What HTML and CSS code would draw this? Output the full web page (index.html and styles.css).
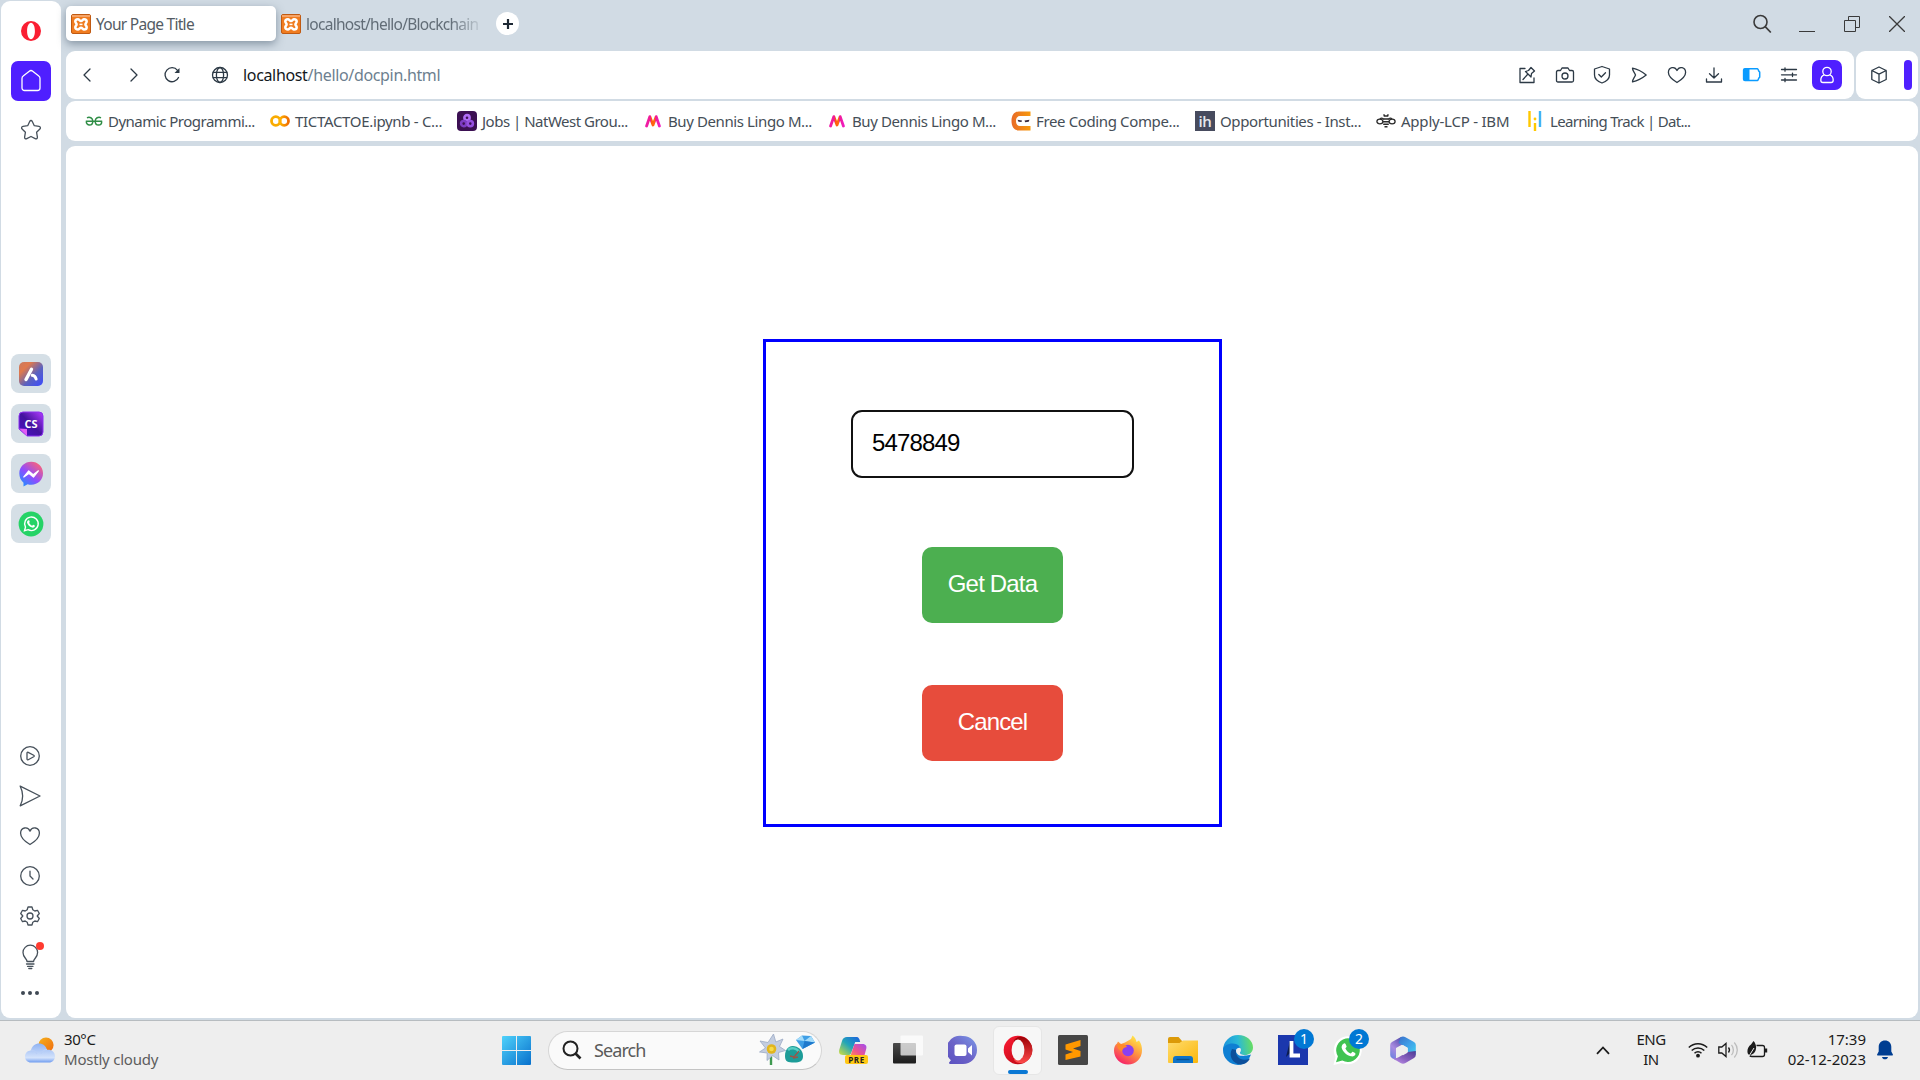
FILE: index.html
```html
<!DOCTYPE html>
<html lang="en">
<head>
<meta charset="utf-8">
<title>Your Page Title</title>
<link rel="stylesheet" href="styles.css">
</head>
<body>
<svg class="defs" width="0" height="0" aria-hidden="true">
  <defs>
    <linearGradient id="gWin" x1="0" y1="0" x2="1" y2="1"><stop offset="0" stop-color="#4fd2fb"/><stop offset="1" stop-color="#0870cc"/></linearGradient>
    <linearGradient id="gAria" x1="0" y1="0" x2="1" y2="1"><stop offset="0" stop-color="#c97a62"/><stop offset=".25" stop-color="#e0794c"/><stop offset=".6" stop-color="#5a62c0"/><stop offset="1" stop-color="#3c4bff"/></linearGradient>
    <linearGradient id="gMsg" x1="0" y1="1" x2=".8" y2="0"><stop offset="0" stop-color="#0a9cff"/><stop offset=".5" stop-color="#8f4cff"/><stop offset="1" stop-color="#ff6474"/></linearGradient>
    <linearGradient id="gCs" x1="0" y1="1" x2="1" y2="0"><stop offset="0" stop-color="#4a10c8"/><stop offset=".5" stop-color="#43129e"/><stop offset="1" stop-color="#b23cff"/></linearGradient>
    <linearGradient id="gCloud" x1="0" y1="0" x2="0" y2="1"><stop offset="0" stop-color="#8fb2f2"/><stop offset=".75" stop-color="#d4e3fb"/><stop offset="1" stop-color="#6f9cf0"/></linearGradient>
    <linearGradient id="gSun" x1="0" y1="0" x2="1" y2="1"><stop offset="0" stop-color="#f5b21c"/><stop offset="1" stop-color="#f06a10"/></linearGradient>
    <linearGradient id="gOpera" x1="0" y1="0" x2="1" y2="1"><stop offset="0" stop-color="#ff1b35"/><stop offset="1" stop-color="#b0070f"/></linearGradient>
    <linearGradient id="gOpera2" x1="0" y1="0" x2="0" y2="1"><stop offset="0" stop-color="#9c0006"/><stop offset="1" stop-color="#ff4b4b"/></linearGradient>
    <linearGradient id="gFolder" x1="0" y1="0" x2="1" y2="1"><stop offset="0" stop-color="#ffdc6e"/><stop offset="1" stop-color="#fbb70b"/></linearGradient>
    <linearGradient id="gEdge" x1="0" y1=".4" x2="1" y2=".3"><stop offset="0" stop-color="#1b93dc"/><stop offset=".5" stop-color="#2bb9d6"/><stop offset="1" stop-color="#6be05a"/></linearGradient>
    <linearGradient id="gFox" x1=".8" y1="0" x2=".2" y2="1"><stop offset="0" stop-color="#fff04a"/><stop offset=".45" stop-color="#ff9640"/><stop offset="1" stop-color="#f5156c"/></linearGradient>
    <linearGradient id="gChat" x1="0" y1="1" x2="1" y2="0"><stop offset="0" stop-color="#5a50c0"/><stop offset=".5" stop-color="#6c63c8"/><stop offset="1" stop-color="#7b9ae8"/></linearGradient>
    <linearGradient id="gCopA" x1="1" y1="0" x2="0" y2="1"><stop offset="0" stop-color="#1b5fe0"/><stop offset=".5" stop-color="#22a5b8"/><stop offset="1" stop-color="#d4e03c"/></linearGradient>
    <linearGradient id="gCopB" x1="1" y1="0" x2="0" y2="1"><stop offset="0" stop-color="#a04cf0"/><stop offset=".6" stop-color="#f0568c"/><stop offset="1" stop-color="#ff9a4c"/></linearGradient>
    <linearGradient id="gDark" x1="0" y1="0" x2="0" y2="1"><stop offset="0" stop-color="#4b4b4b"/><stop offset="1" stop-color="#1c1c1c"/></linearGradient>
    <linearGradient id="gColab" x1="0" y1="0" x2="1" y2="0"><stop offset="0" stop-color="#ffb400"/><stop offset="1" stop-color="#ef6c00"/></linearGradient>
    <linearGradient id="gCn" x1="0" y1="0" x2="1" y2="0"><stop offset="0" stop-color="#e86a28"/><stop offset="1" stop-color="#f79a0c"/></linearGradient>
    <linearGradient id="gMy" x1="0" y1="0" x2="1" y2="0"><stop offset="0" stop-color="#f01ca8"/><stop offset=".3" stop-color="#f01c90"/><stop offset=".36" stop-color="#ff5a10"/><stop offset=".64" stop-color="#ff6a10"/><stop offset=".7" stop-color="#f01c90"/><stop offset="1" stop-color="#f01cc0"/></linearGradient>
    <linearGradient id="gMa" x1="0" y1="1" x2=".6" y2="0"><stop offset="0" stop-color="#5c7fe0"/><stop offset=".5" stop-color="#a98be0"/><stop offset="1" stop-color="#5a4fb0"/></linearGradient>
    <linearGradient id="gMb" x1="0" y1="0" x2="1" y2="1"><stop offset="0" stop-color="#3a6fc8"/><stop offset=".5" stop-color="#3f9fe8"/><stop offset="1" stop-color="#40d0f0"/></linearGradient>
    <linearGradient id="gMc" x1="1" y1="0" x2="0" y2="1"><stop offset="0" stop-color="#4c3a94"/><stop offset=".55" stop-color="#8a62c0"/><stop offset="1" stop-color="#c79af0"/></linearGradient>
    <symbol id="xampp" viewBox="0 0 20 20"><rect x=".5" y=".5" width="19" height="19" rx="1.500" fill="#f07c20" stroke="#c05a12"/><rect x="1" y="1" width="18" height="2" fill="#f6a467"/><g fill="none" stroke="#fff" stroke-width="2.500" stroke-linejoin="round"><path d="M7 5.300c1.200 0 1.700 1.800 3 1.800s1.800-1.800 3-1.800c1.800 0 2.700 1 2.700 2.300 0 1.200-1.300 1.600-1.300 2.800s1.300 1.600 1.300 2.800c0 1.300-.9 2.300-2.700 2.300-1.200 0-1.700-1.800-3-1.800s-1.800 1.800-3 1.800c-1.800 0-2.700-1-2.700-2.300 0-1.200 1.300-1.600 1.300-2.800S4.300 8.800 4.300 7.600C4.300 6.300 5.200 5.300 7 5.300z"/></g><path d="M8.500 10.400h3" stroke="#fff" stroke-width="1.500"/></symbol>
    <symbol id="myntra" viewBox="0 0 16 14"><path d="M1.600 12 4.800 2.600 8 11 11.200 2.600 14.400 12" fill="none" stroke="url(#gMy)" stroke-width="2.800" stroke-linejoin="round" stroke-linecap="round"/></symbol>
  </defs>
</svg>

<div class="browser">
  <aside class="sidebar">
    <svg class="opera-mark" width="20" height="20" viewBox="0 0 20 20"><path fill-rule="evenodd" fill="#fa1e32" d="M10 0a10 10 0 1 0 0 20a10 10 0 0 0 0-20zM10 1.800c2.300 0 3.900 3.600 3.900 8.200s-1.600 8.200-3.900 8.200S6.100 14.600 6.100 10 7.700 1.800 10 1.800z"/></svg>
    <div class="home"><svg class="line" width="22" height="24" viewBox="0 0 22 24"><path d="M2 9.500c0-1 .4-1.900 1.200-2.500L9.300 2.200c1-.8 2.400-.8 3.400 0L18.800 7c.8.600 1.200 1.500 1.200 2.500V19a2.500 2.500 0 0 1-2.500 2.500h-13A2.500 2.500 0 0 1 2 19z"/></svg></div>
    <svg class="line star" width="22" height="22" viewBox="0 0 22 22"><path d="M11 1.500c.6 0 1 .4 1.300 1l2 4.200 4.700.7c1.400.2 1.900 1.600.9 2.600l-3.300 3.300.8 4.800c.2 1.300-1 2.200-2.200 1.600L11 17.500l-4.200 2.200c-1.200.6-2.400-.3-2.200-1.600l.8-4.800L2.100 10c-1-1-.5-2.400.9-2.600l4.700-.7 2-4.200c.3-.6.700-1 1.300-1z"/></svg>

    <div class="apps">
      <div class="app"><svg width="26" height="26" viewBox="0 0 26 26"><rect x="1" y="1" width="24" height="24" rx="5" fill="url(#gAria)"/><path d="M8 18.500 13.500 8.300" stroke="#fff" stroke-width="3.400" stroke-linecap="round"/><path d="M14.300 14.300c2 .2 3.300 1.600 3.800 3.700" fill="none" stroke="#fff" stroke-width="3" stroke-linecap="round"/></svg></div>
      <div class="app"><svg width="26" height="26" viewBox="0 0 26 26"><path d="M5 1h16a4 4 0 0 1 4 4v16a4 4 0 0 1-4 4H9L1 18V5a4 4 0 0 1 4-4z" fill="url(#gCs)" stroke="#8b30f0"/><path d="m1 17.500 8 .500V25z" fill="#e05cf5"/><text x="13" y="17" class="cs-text">CS</text></svg></div>
      <div class="app"><svg width="26" height="26" viewBox="0 0 26 26"><path d="M13.300.800c6.600 0 11.700 4.900 11.700 11.500S20 23.700 13.300 23.700c-1.300 0-2.500-.1-3.700-.5L5.500 25.600v-3.900C2.900 19.500 1.300 16.300 1.300 12.300 1.300 5.700 6.700.800 13.300.800z" fill="url(#gMsg)"/><path d="m5.800 16 4.900-6 4.500 3.700 5.200-3.900-4.900 6.300-4.700-3.700z" fill="#fff" stroke="#fff" stroke-width="1.200" stroke-linejoin="round"/></svg></div>
      <div class="app"><svg width="26" height="26" viewBox="0 0 26 26"><circle cx="13" cy="13" r="12.400" fill="#25d366"/><path d="m6.500 19.700 1-3.600a6.800 6.800 0 1 1 2.600 2.600z" fill="none" stroke="#fff" stroke-width="1.400"/><path d="M10.500 9.300c.5-.3.900 0 1.200 1.400 0 .5-.5.800-.6 1.100.7 1.400 1.600 2.300 3 2.900.4-.1.700-.8 1.100-.9.800.3 1.700.7 1.700 1.200-.2 1.300-1.600 1.800-2.700 1.600-3-.8-4.700-2.800-5.200-5-.1-1 .6-2 1.500-2.300z" fill="#fff"/></svg></div>
    </div>

    <div class="tools">
      <svg class="line" width="22" height="22" viewBox="0 0 22 22"><circle cx="11" cy="11" r="9.300"/><path d="M8 8c0-.8.600-1 1.200-.7l5.500 2.900c.7.400.7 1.200 0 1.600l-5.500 2.900c-.6.300-1.200 0-1.200-.7z"/></svg>
      <svg class="line" width="22" height="22" viewBox="0 0 22 22"><path d="M1.200 1.200 21 11 1.200 20.800C4.600 14 4.600 8 1.200 1.200z"/></svg>
      <svg class="line" width="22" height="22" viewBox="0 0 22 22"><path d="M11 19.500C8.500 18 1.600 13.500 1.600 8.200c0-5.700 7.200-7.500 9.400-2 2.200-5.500 9.400-3.700 9.400 2 0 5.300-6.900 9.800-9.400 11.300z"/></svg>
      <svg class="line" width="22" height="22" viewBox="0 0 22 22"><circle cx="11" cy="11" r="9.300"/><path d="M11 6.200V11l3 3"/></svg>
      <svg class="line" width="22" height="22" viewBox="0 0 22 22"><path d="M9 2h4l.8 2.800 2 1.200 2.700-.7 1.800 3.200L18.200 11l2.100 2.500-1.800 3.200-2.700-.7-2 1.200L13 20H9l-.8-2.800-2-1.200-2.700.7-1.800-3.200L3.800 11 1.700 8.500l1.800-3.200 2.700.7 2-1.200z"/><circle cx="11" cy="11" r="3"/></svg>
      <div class="bulb"><svg class="line" width="22" height="26" viewBox="0 0 22 26"><path d="M8 17.500c0-3-4-4-4-9a7.300 7.300 0 0 1 14.600 0c0 5-4 6-4 9zM7.500 20h7.500M8.500 22.300h5.500M9.800 24.500h3"/></svg><i class="dot"></i></div>
      <svg class="dots" width="22" height="6" viewBox="0 0 22 6"><circle cx="4" cy="3" r="2"/><circle cx="11" cy="3" r="2"/><circle cx="18" cy="3" r="2"/></svg>
    </div>
  </aside>

  <main class="main">
    <header class="tabs">
      <div class="tab active"><svg width="20" height="20"><use href="#xampp"/></svg><span class="t-tab1">Your Page Title</span></div>
      <div class="tab second"><svg width="20" height="20"><use href="#xampp"/></svg><span class="fade t-tab2">localhost/hello/Blockchain</span></div>
      <div class="plus"><svg width="10" height="10" viewBox="0 0 10 10"><path d="M5 0v10M0 5h10" stroke="#1c2733" stroke-width="2.200"/></svg></div>
      <div class="window-controls">
        <svg class="ctl" width="20" height="20" viewBox="0 0 20 20"><circle cx="8.500" cy="8" r="6.500" stroke-width="1.600"/><path d="m13.200 12.700 5.600 5.800" stroke-width="1.700"/></svg>
        <svg class="ctl" width="16" height="16" viewBox="0 0 16 16"><path d="M0 15.500h16"/></svg>
        <svg class="ctl" width="16" height="16" viewBox="0 0 16 16"><path d="M.5 4.500h11v11H.5zM4.500 4.500v-4h11v11h-4"/></svg>
        <svg class="ctl" width="16" height="16" viewBox="0 0 16 16"><path d="m0 0 16 16M16 0 0 16" stroke-width="1.300"/></svg>
      </div>
    </header>

    <div class="address-row">
      <div class="address">
        <div class="nav">
          <svg class="line" width="20" height="20" viewBox="0 0 20 20"><path d="M13 4 7 10l6 6"/></svg>
          <svg class="line fwd" width="20" height="20" viewBox="0 0 20 20"><path d="m7 4 6 6-6 6"/></svg>
          <svg class="line reload" width="20" height="20" viewBox="0 0 20 20"><path d="M16.500 12.500A7 7 0 1 1 15.500 5.300"/><path d="M17.500 3v5h-5z" fill="#2c3945" stroke="none"/></svg>
          <svg class="line globe" width="20" height="20" viewBox="0 0 20 20"><circle cx="10" cy="10" r="7.500"/><ellipse cx="10" cy="10" rx="3.600" ry="7.500"/><path d="M3.300 7.300h13.400M3.300 12.700h13.400"/></svg>
          <span class="url"><b>localhost</b>/hello/docpin.html</span>
        </div>
        <div class="actions">
          <span><svg class="line" width="20" height="20" viewBox="0 0 20 20"><path d="M8 3.500H3v14h14v-4.500M11.500 5.500l2.500-3 3.500 3.500-3 2.500-.5 3.500-5.500-5.500zM10.500 9.500l-4.500 5"/></svg></span>
          <span><svg class="line" width="20" height="20" viewBox="0 0 20 20"><path d="M3 5.500h2.500L7 3h6l1.500 2.500H17c1 0 1.500.7 1.500 1.500v8.500c0 1-.5 1.500-1.500 1.500H3c-1 0-1.500-.5-1.500-1.500V7c0-.8.500-1.500 1.500-1.500z"/><circle cx="10" cy="11" r="3"/></svg></span>
          <span><svg class="line" width="20" height="20" viewBox="0 0 20 20"><path d="M10 1.500 17.500 4v6c0 4-3.200 6.500-7.500 8-4.300-1.500-7.500-4-7.500-8V4z"/><path d="m6.800 9.500 2.500 2.500 4.200-4.200"/></svg></span>
          <span><svg class="line" width="20" height="20" viewBox="0 0 20 20"><path d="M3.500 3.200c4 .8 9.500 3.400 13.700 6.800-4.200 3.400-9.700 6-13.700 6.800 0-2.500 2-4 3-6.800-1-2.800-3-4.300-3-6.800z"/></svg></span>
          <span><svg class="line" width="20" height="20" viewBox="0 0 20 20"><path d="M10 17.500C7.500 16 1.400 12 1.400 7.500c0-5.300 6.500-6.800 8.600-2 2.100-4.800 8.600-3.300 8.600 2 0 4.500-6.100 8.500-8.600 10z"/></svg></span>
          <span><svg class="line" width="20" height="20" viewBox="0 0 20 20"><path d="M10 3v9.500M5.500 8.800 10 13l4.500-4.200M2.500 14v3h15v-3"/></svg></span>
          <span><svg width="20" height="20" viewBox="0 0 20 20"><path d="M3 3.700h12.500c.7 0 .7 2.300 2.200 3.400v5c-1.500 1.100-1.500 3.400-2.200 3.400H3c-1 0-1.400-.5-1.400-1.300V5c0-.8.4-1.300 1.400-1.300z" fill="none" stroke="#0a9bff" stroke-width="1.500"/><path d="M2 3.700h5.500v11.800H2z" fill="#0a9bff"/></svg></span>
          <span><svg class="line" width="20" height="20" viewBox="0 0 20 20"><path d="M2.500 4.500h15M2.500 9.800h15M2.500 15h15M6 2.800v3.400M13.500 8.100v3.400M6 13.300v3.400"/></svg></span>
          <span><em class="profile"><svg class="line" width="20" height="20" viewBox="0 0 20 20"><circle cx="10" cy="6.500" r="4.200"/><path d="M7 10c-1.900.7-3.200 2.800-3.200 5.200 0 1.800 1 2.300 2.200 2.300h8c1.200 0 2.200-.5 2.200-2.300 0-2.400-1.300-4.500-3.200-5.200"/></svg></em></span>
        </div>
      </div>
      <div class="side-pill">
        <svg class="line" width="20" height="20" viewBox="0 0 20 20"><path d="m10 2 7.200 3.500v9L10 18l-7.200-3.500v-9zM2.800 5.500 10 9.200l7.200-3.700M10 9.200V18"/></svg>
        <i class="bar"></i>
      </div>
    </div>

    <nav class="bookmarks">
      <a class="bm w1"><svg width="18" height="20" viewBox="0 0 18 20"><path d="M.8 10.200h16.400M2 6.800c2.600-1.400 5.800.2 5.800 3.400 0 2.400-1.500 3.900-3.300 3.900-1.900 0-3.200-1.500-3.200-3.600M16 6.800c-2.600-1.400-5.800.2-5.800 3.400 0 2.400 1.500 3.900 3.300 3.900 1.900 0 3.200-1.500 3.200-3.600" fill="none" stroke="#2f8d46" stroke-width="1.500"/></svg><span>Dynamic Programmi...</span></a>
      <a class="bm w2"><svg width="20" height="20" viewBox="0 0 20 20"><circle cx="5.800" cy="10" r="4.300" fill="none" stroke="#f9ab00" stroke-width="2.800"/><circle cx="14.200" cy="10" r="4.300" fill="none" stroke="url(#gColab)" stroke-width="2.800"/></svg><span>TICTACTOE.ipynb - C...</span></a>
      <a class="bm w3"><svg width="20" height="20" viewBox="0 0 20 20"><rect width="20" height="20" rx="4" fill="#3c1053"/><g fill="none" stroke-width="2.600"><circle cx="10" cy="6.700" r="2.600" stroke="#b06cf5"/><circle cx="6.700" cy="12.600" r="2.600" stroke="#7d3cc4"/><circle cx="13.300" cy="12.600" r="2.600" stroke="#9650e0"/></g></svg><span>Jobs | NatWest Grou...</span></a>
      <a class="bm w4"><svg width="16" height="14"><use href="#myntra"/></svg><span>Buy Dennis Lingo M...</span></a>
      <a class="bm w5"><svg width="16" height="14"><use href="#myntra"/></svg><span>Buy Dennis Lingo M...</span></a>
      <a class="bm w6"><svg width="20" height="20" viewBox="0 0 20 20"><path d="M19.500.500V5H9C6.500 5 5 7 5 10s1.500 5 4 5h10.500v4.500H8C3 19.500.500 15.500.500 10S3 .5 8 .5z" fill="url(#gCn)"/><path d="m6.500 8.800 4.500.8-.5 1.500-3-.3zM13.500 9.600l5-.8-.8 2-3.500.4z" fill="#3a2c40"/></svg><span>Free Coding Compe...</span></a>
      <a class="bm w7"><svg width="20" height="20" viewBox="0 0 20 20"><rect width="20" height="20" fill="#474b5e"/><text x="10" y="16" class="ih-text">ih</text></svg><span>Opportunities - Inst...</span></a>
      <a class="bm w8"><svg width="20" height="20" viewBox="0 0 20 20"><g fill="none" stroke="#2b2b2b" stroke-width="1.300"><ellipse cx="3.900" cy="10.500" rx="3" ry="2.300"/><ellipse cx="16.100" cy="10.500" rx="3" ry="2.300"/><path d="M4 8.200c1-1.400 2.600-1.400 4 .3M16 8.200c-1-1.400-2.600-1.400-4 .3"/></g><path d="M7.700 5h4.600M7.500 8h5M6.800 10.700h6.400M7.200 13.300h5.600M8.500 15.800h3M7.500 3.500l1 1M12.500 3.500l-1 1" stroke="#2b2b2b" stroke-width="1.600"/></svg><span>Apply-LCP - IBM</span></a>
      <a class="bm w9"><svg width="14" height="20" viewBox="0 0 14 20"><path d="M1.500 0v16M7 12v8" stroke="#ffc800" stroke-width="2.400"/><circle cx="7" cy="8" r="1.400" fill="#ffc800"/><path d="M12 0v16" stroke="#3fb4f5" stroke-width="2.400"/></svg><span>Learning Track | Dat...</span></a>
    </nav>

    <section class="page">
      <form class="pin-form">
        <div class="field">5478849</div>
        <div class="btn get">Get Data</div>
        <div class="btn cancel">Cancel</div>
      </form>
    </section>
  </main>
</div>

<footer class="taskbar">
  <div class="weather">
    <svg width="30" height="26" viewBox="0 0 30 26"><circle cx="21" cy="8" r="7.600" fill="url(#gSun)"/><path d="M6 25.500C2.500 25.500 0 23 0 19.500c0-3.300 2.500-5.800 5.800-6C7 9 10.300 6.500 14 6.500c4.200 0 7 2.600 8 6.200 4.400-.5 8 2.200 8 6.500 0 3.700-2.600 6.300-6 6.300z" fill="url(#gCloud)"/><path d="M5.800 13.500c2.700-.2 5 1 6.200 3.500M22 12.700c-3.500.2-5 1.800-6 4" fill="none" stroke="#b9cff7" stroke-width="1.200"/></svg>
    <div class="lines"><span class="t-temp">30°C</span><span class="muted t-cloud">Mostly cloudy</span></div>
  </div>
  <div class="slot"><svg width="29" height="29" viewBox="0 0 29 29"><path d="M1 0h13v14H0V1q0-1 1-1zM15 0h13q1 0 1 1v13H15zM0 15h14v14H1q-1 0-1-1zM15 15h14v13q0 1-1 1H15z" fill="url(#gWin)"/></svg></div>
  <div class="search">
    <svg width="20" height="20" viewBox="0 0 20 20"><circle cx="8.500" cy="8.500" r="7" fill="none" stroke="#222" stroke-width="2"/><path d="m13.500 13.500 5 5" stroke="#222" stroke-width="2.600"/></svg>
    <span>Search</span>
    <svg class="art" width="57" height="32" viewBox="0 0 57 32"><path d="M12 18v13" stroke="#3f9a50" stroke-width="2.400"/><path d="m14.500 0 2.300 8 7.200-3-3.500 7.500 6 4-7 2 .5 7.500-6.500-4.500-5.500 5 .2-7.500L.5 18l6-4L1 7l8 1.500z" fill="#c3cde0" stroke="#9ba9c4" stroke-width=".8"/><circle cx="12.500" cy="15" r="4.800" fill="#e2b51d"/><circle cx="12.500" cy="15" r="2.300" fill="#f7dc4a"/><path d="M30 13c6-3 14 2 14 9 0 5-3 6.500-9 6.500S26 28 26 22c0-4 1-7 4-9z" fill="#1d9c98"/><path d="M29 16c3-3 9-2 11 2" fill="none" stroke="#56cdc4" stroke-width="2.500"/><path d="m31 22 4 1 5-6M34 24l5-1" stroke="#9a5548" stroke-width="1.300" fill="none"/><path d="m37 6 6-4.500 9 .5 4 6.500L43.500 15z" fill="#3f9fe6"/><path d="m37 6 6-4.500 2.500 5.500zM45.500 7 52 2l4 6.500z" fill="#a5dcfa"/><path d="m45.500 7 10.500 1.500L43.500 15z" fill="#1f79cc"/></svg>
  </div>
  <div class="slots">
    <div class="slot"><svg width="30" height="30" viewBox="0 0 30 30"><path d="M9 2h9c3 0 3.500 2 4.200 5h-5L13 18.500c-.7 1.500-1.500 1.500-3 1.500H5c-4 0-4.500-3-3.500-6l2.500-8C5 3 6.500 2 9 2z" fill="url(#gCopA)"/><path d="M16.500 9h8c3.500 0 4.500 2.500 3.700 5L26 22H12z" fill="url(#gCopB)"/><rect x="7" y="20" width="23" height="9" rx="2" fill="#ffc814"/><text x="18.500" y="27.600" class="pre-text">PRE</text></svg></div>
    <div class="slot"><svg width="30" height="30" viewBox="0 0 30 30"><rect x="0" y="8" width="23" height="20.500" rx="1" fill="url(#gDark)"/><rect x="7.500" y=".500" width="22.500" height="20" rx="1" fill="#fff" fill-opacity=".72"/></svg></div>
    <div class="slot"><svg width="30" height="30" viewBox="0 0 30 30"><path d="M15 1a14 14 0 1 1 0 28H2c-1 0-1.400-1-.7-1.800l1.600-2A14 14 0 0 1 15 1z" fill="url(#gChat)"/><rect x="6.500" y="9.500" width="12" height="11.500" rx="2" fill="#fff"/><path d="m20 13.500 4-3.500v10.500L20 17z" fill="#fff"/></svg></div>
    <div class="slot opened"><svg width="30" height="30" viewBox="0 0 30 30"><circle cx="15" cy="15" r="14.300" fill="url(#gOpera)"/><path d="M11 5C15 0 22 1 26 6c4.500 5.500 4.500 12.500 0 18-4 5-11 6-15 1" fill="url(#gOpera2)"/><ellipse cx="15" cy="15" rx="6.400" ry="10.400" fill="#f7f7f7"/></svg><i class="underline"></i></div>
    <div class="slot"><svg width="30" height="30" viewBox="0 0 30 30"><rect width="30" height="30" rx="1.500" fill="#464646"/><path d="M22.500 5v6L15 13.500l7.500 2.500v5.500L7.500 25v-5.500L15 17l-7.500-2.500V9.500z" fill="#ff9800"/></svg></div>
    <div class="slot"><svg width="30" height="30" viewBox="0 0 30 30"><path d="M5 6.500 8 9l4-1.500 6-3.500L19.500.5C22 2.500 23 4.500 23.500 7l2.500-1.500c2.500 3 3 7 3 10A14 14 0 0 1 1 15.500c0-3.500 1.500-6 3-7z" fill="url(#gFox)"/><circle cx="15" cy="15.500" r="5.800" fill="#8a3ff0"/><path d="M4.500 9C10 9 13 9.500 14 12c-3 .5-5 2-5 4.500C5 15 4 12 4.500 9z" fill="#ff8a2a"/></svg></div>
    <div class="slot"><svg width="30" height="30" viewBox="0 0 30 30"><path d="M0 4q0-2 2-2h8.500L14 6h14v5H0z" fill="#dc9a08"/><path d="M0 8h11.500L15 5.500h15V27q0 1-1 1H1q-1 0-1-1z" fill="url(#gFolder)"/><path d="M5 28v-4q0-3 3-3h14q3 0 3 3v4z" fill="#0f73c8"/><path d="M8.500 24.500h13" stroke="#0a5290" stroke-width="1.400"/></svg></div>
    <div class="slot"><svg width="30" height="30" viewBox="0 0 30 30"><path d="M0 15A15 15 0 0 1 15 0c9 0 15 6 15 12.500 0 5-4 7.500-8 7.500-3.500 0-5.500-1.500-5-3 1.500-2 .5-6.500-4.500-6.500C7 10.500 2 14 0 15z" fill="url(#gEdge)"/><path d="M0 15c0-4 5-6.500 9.500-6.500 6 0 9.500 4.500 8 8-.8 2 1 4.500 6 4 2 0 3.500-.8 4.500-1C25.500 26 21 30 15 30A15 15 0 0 1 0 15z" fill="#0f7fd3"/><path d="M9 14c-4 7 1 15 8.500 15.500 4.500 0 8-3 9.500-6-8 3.500-15-1-14-8.500" fill="#0c4f9b"/><path d="M16.800 12.800c2 1.400 1 3.700.4 4.500-.7 1.400 1 2.900 4.800 2.900-5 1.800-9-1-9-4.500 0-1.500 1-2.900 3.800-2.900z" fill="#eee"/></svg></div>
    <div class="slot"><svg width="30" height="30" viewBox="0 0 30 30"><rect width="30" height="30" fill="#1b37ad"/><path d="m8 22 4-4V6z" fill="#0b1c50"/><path d="M13.500 6v14.500H22" fill="none" stroke="#fff" stroke-width="3.800"/></svg><i class="badge">1</i></div>
    <div class="slot"><svg width="30" height="30" viewBox="0 0 30 30"><path d="M.5 30 2.500 22A14 14 0 1 1 9 28z" fill="#fff"/><path d="m3 27.300 1.900-6A11.800 11.800 0 1 1 9.300 25.500z" fill="#40c351"/><path d="M11 8.500c1-.5 1.700.2 2.600 3 0 .8-1 1.300-1.200 2 1.400 2.700 3 4.200 5.200 5 .7 0 1.300-1.500 2-1.700 1.500.6 3 1.400 2.900 2.200-.2 2-2.500 2.700-4.500 2.300-5.200-1.300-8.500-5-9.400-8.800-.1-1.700 1-3.600 2.400-4z" fill="#fff"/></svg><i class="badge">2</i></div>
    <div class="slot"><svg width="30" height="30" viewBox="0 0 30 30"><path d="M12.500 2.300 4 7Q2.200 8 2.200 10v10Q2.200 22 4 23l4 2.200V13L17 8V2z" fill="url(#gMa)"/><path d="M12.500 2.300q2.500-1.600 5 0L26 7q1.800 1 1.800 3v10l-8-2.500V13L10.500 8z" fill="url(#gMb)"/><path d="M27.800 16v4q0 2-1.800 3l-8.500 5q-2.500 1.300-5 0L4 23q4 1 7-1l8.500-5z" fill="url(#gMc)"/><path d="m15 10 4.500 2.700v5L15 20.300l-4.500-2.600v-5z" fill="#eee"/></svg></div>
  </div>
  <div class="tray">
    <svg class="ink" width="14" height="9" viewBox="0 0 14 9"><path d="m1 7.800 6-6.300 6 6.300" stroke-width="1.800"/></svg>
    <div class="lines lang"><span>ENG</span><span>IN</span></div>
    <svg class="ink wifi" width="20" height="18" viewBox="0 0 20 18"><path d="M.8 6.500c5.200-5 13.200-5 18.400 0M3.700 9.500c3.600-3.500 9-3.500 12.600 0M6.500 12.300c2-2 5-2 7 0" stroke-width="1.500"/><circle cx="10" cy="14.700" r="1.900" fill="#1b1b1b" stroke="none"/></svg>
    <svg class="ink vol" width="20" height="18" viewBox="0 0 20 18"><path d="M.8 6h3L8 2.500v13L3.800 12h-3z"/><path d="M10.500 6.500c1.200 1.500 1.200 3.500 0 5"/><path d="M13.500 3.800c2.500 3 2.500 7.400 0 10.400M16.300 1.500c4 4.500 4 10.500 0 15" stroke="#bdbdbd"/></svg>
    <svg class="ink batt" width="21" height="18" viewBox="0 0 21 18"><path d="M9.500 4.500h6q2 0 2 2v7q0 2-2 2H5q-1.500 0-2.500-1"/><path d="M19 7.500v4" stroke-width="2.400"/><path d="M6.500 0c3 3 4 9 0 12.500L3 14.500 1 13C-.5 9.500 1 5.500 4 3.500z" fill="#1b1b1b" stroke="none"/><path d="M2 15 7 7" stroke="#eee" stroke-width="1"/></svg>
    <div class="lines clock"><span class="t-time">17:39</span><span class="t-date">02-12-2023</span></div>
    <svg class="bell" width="16" height="20" viewBox="0 0 16 20"><path d="M8 .500c3.700 0 6.300 2.700 6.300 6.300v4.700l1.600 3c.2.500 0 1-.6 1H.7c-.6 0-.8-.5-.6-1l1.600-3V6.800C1.700 3.200 4.300.500 8 .500zM5 17h6c-.3 1.400-1.500 2.300-3 2.300S5.300 18.400 5 17z" fill="#003e92"/></svg>
  </div>
</footer>
</body>
</html>
```
FILE: styles.css
```css
* { box-sizing: border-box; }
body { margin: 0; width: 1920px; height: 1080px; overflow: hidden; display: flex; flex-direction: column; background: #d1dbe4; font-family: "Noto Sans", "Open Sans", sans-serif; font-size: 15px; color: #454e57; }
.defs { position: absolute; }
svg { display: block; flex: none; }
span { white-space: nowrap; }
i, em, b { font-style: normal; font-weight: 400; }
.line { fill: none; stroke: #2c3945; stroke-width: 1.3; stroke-linejoin: round; stroke-linecap: round; }

.browser { height: 1020px; display: flex; gap: 5px; padding: 1px 2px 2px 1px; }

.sidebar { width: 60px; background: #fff; border-radius: 9px; display: flex; flex-direction: column; align-items: center; padding: 20px 1px 0 0; height: 1017px; }
.sidebar .line { stroke: #47515b; }
.home { width: 40px; height: 40px; margin-top: 20px; border-radius: 7px; background: #4f1fff; display: flex; align-items: center; justify-content: center; }
.sidebar .home .line { stroke: #fff; }
.star { margin-top: 18px; }
.apps { margin-top: 213px; display: flex; flex-direction: column; gap: 10px; }
.app { width: 40px; height: 39px; margin-bottom: 1px; border-radius: 8px; background: #d5dfe6; display: flex; align-items: center; justify-content: center; }
.cs-text { font: 700 11px "Open Sans", sans-serif; fill: #fff; text-anchor: middle; }
.tools { margin-top: 200px; display: flex; flex-direction: column; align-items: center; gap: 18px; padding: 1px 1px 0 0; }
.bulb { position: relative; margin-top: -1px; }
.dot { position: absolute; left: 17px; top: -2px; width: 8px; height: 8px; border-radius: 50%; background: #ff3b30; }
.dots { fill: #3f4953; margin-top: 2px; }

.main { width: 1852px; display: flex; flex-direction: column; }
.tabs { height: 50px; display: flex; align-items: flex-start; padding-top: 5px; }
.tab { height: 35px; display: flex; align-items: center; gap: 5px; padding-left: 5px; font-size: 15.5px; color: #545c64; }
.active { width: 210px; background: #fff; border-radius: 5px; box-shadow: 0 3px 8px rgba(60, 80, 100, .5); }
.second { width: 214px; color: #626d77; }
.fade { -webkit-mask-image: linear-gradient(90deg, #000 84%, transparent 104%); mask-image: linear-gradient(90deg, #000 84%, transparent 104%); }
.t-tab1 { letter-spacing: -.72px; }
.t-tab2 { letter-spacing: -.72px; }
.plus { width: 23px; height: 23px; margin: 6px 0 0 6px; border-radius: 50%; background: #fff; display: flex; align-items: center; justify-content: center; }
.window-controls { margin: 8px 13px 0 auto; display: flex; align-items: center; }
.ctl { fill: none; stroke: #3a3a3a; stroke-width: 1; margin-left: 29px; }
.ctl:nth-child(2) { margin-left: 27px; }

.address-row { height: 48px; display: flex; gap: 2px; }
.address { width: 1788px; background: #fff; border-radius: 9px; display: flex; justify-content: space-between; align-items: center; padding: 0 9px 0 11px; }
.nav { display: flex; align-items: center; }
.fwd { margin-left: 27px; }
.reload { margin-left: 18px; }
.globe { margin-left: 28px; }
.url { margin-left: 13px; font-size: 16px; letter-spacing: -.34px; color: #6d7f90; }
.url b { color: #14181c; }
.actions { display: flex; }
.actions > span { width: 37.4px; display: flex; align-items: center; justify-content: center; }
.profile { width: 30px; height: 30px; margin-left: 1px; border-radius: 7px; background: #4f1fff; display: flex; align-items: center; justify-content: center; }
.profile .line { stroke: #fff; }
.side-pill { width: 62px; background: #fff; border-radius: 9px; display: flex; align-items: center; padding-left: 13px; }
.bar { width: 8px; height: 30px; margin-left: 15px; border-radius: 4px; background: #4f1fff; }

.bookmarks { height: 40px; margin-top: 2px; background: #fff; border-radius: 9px; display: flex; align-items: center; padding-left: 19px; }
.bm { display: flex; align-items: center; gap: 5px; flex: none; letter-spacing: -.5px; }
.w1 { width: 185px; } .w2 { width: 187px; letter-spacing: -.32px; } .w3 { width: 188px; }
.w4 { width: 184px; } .w5 { width: 182px; } .w6 { width: 184px; letter-spacing: -.37px; }
.w7 { width: 181px; letter-spacing: -.38px; } .w8 { width: 152px; letter-spacing: -.22px; } .w9 { width: 165px; letter-spacing: -.7px; }
.w4, .w5 { gap: 7px; letter-spacing: -.4px; } .w9 { gap: 8px; } .w1 { gap: 5px; }
.ih-text { font: 600 15px "Open Sans", sans-serif; fill: #e6e7ec; text-anchor: middle; }

.page { height: 872px; margin-top: 5px; background: #fff; border-radius: 9px; display: flex; justify-content: center; padding: 193px 0 0 1px; }
.pin-form { width: 459px; height: 488px; border: 3px solid #00f; display: flex; flex-direction: column; align-items: center; padding-top: 68px; font-family: "Liberation Sans", Arial, sans-serif; font-size: 24px; letter-spacing: -.83px; }
.field { width: 283px; height: 68px; border: 2px solid #111; border-radius: 11px; padding: 0 19px 2px; display: flex; align-items: center; color: #000; }
.btn { width: 141px; height: 76px; border-radius: 10px; color: #fff; display: flex; align-items: center; justify-content: center; padding-bottom: 2px; }
.get { margin-top: 69px; background: #4caf50; }
.cancel { margin-top: 62px; background: #e74c3c; }

.taskbar { height: 60px; background: #eee; border-top: 1px solid #b7bcc0; display: flex; align-items: center; color: #1b1b1b; padding-bottom: 1px; }
.lines { display: flex; flex-direction: column; line-height: 20px; padding-bottom: 3px; }
.muted { color: #5d5d5d; }
.t-temp { letter-spacing: -.4px; }
.t-cloud { letter-spacing: -.22px; }
.weather { width: 489px; padding-left: 25px; display: flex; align-items: center; gap: 9px; }
.slot { position: relative; width: 55px; height: 49px; display: flex; align-items: center; justify-content: center; }
.search { width: 274px; height: 39px; margin: 0 3px 0 4px; border: 1px solid #d6d6d6; border-bottom-color: #c4c4c4; border-radius: 20px; background: #fafafa; display: flex; align-items: center; padding-left: 13px; font-size: 18px; letter-spacing: -.9px; color: #5a5a5a; }
.search span { margin-left: 12px; width: 165px; padding-bottom: 1px; }
.slots { display: flex; }
.pre-text { font: 700 8px "Open Sans", sans-serif; fill: #222; text-anchor: middle; letter-spacing: .5px; }
.opened { width: 49px; margin: 0 3px; background: #f7f7f7; border: 1px solid #e6e6e6; border-radius: 6px; }
.underline { position: absolute; left: 14px; bottom: 0; width: 20px; height: 4px; border-radius: 2px; background: #0a78d4; }
.badge { position: absolute; left: 29px; top: 4px; width: 20px; height: 20px; margin-top: -1px; border-radius: 50%; background: #0078d4; color: #fff; font-size: 14px; line-height: 20px; text-align: center; }
.tray { margin-left: auto; display: flex; align-items: center; padding-right: 27px; }
.ink { fill: none; stroke: #1b1b1b; stroke-width: 1.3; }
.lang { width: 42px; margin-left: 20px; text-align: center; letter-spacing: -.5px; }
.wifi { margin-left: 16px; }
.vol { margin-left: 10px; }
.batt { margin-left: 9px; }
.clock { width: 98px; text-align: right; }
.bell { margin-left: 11px; }
```
